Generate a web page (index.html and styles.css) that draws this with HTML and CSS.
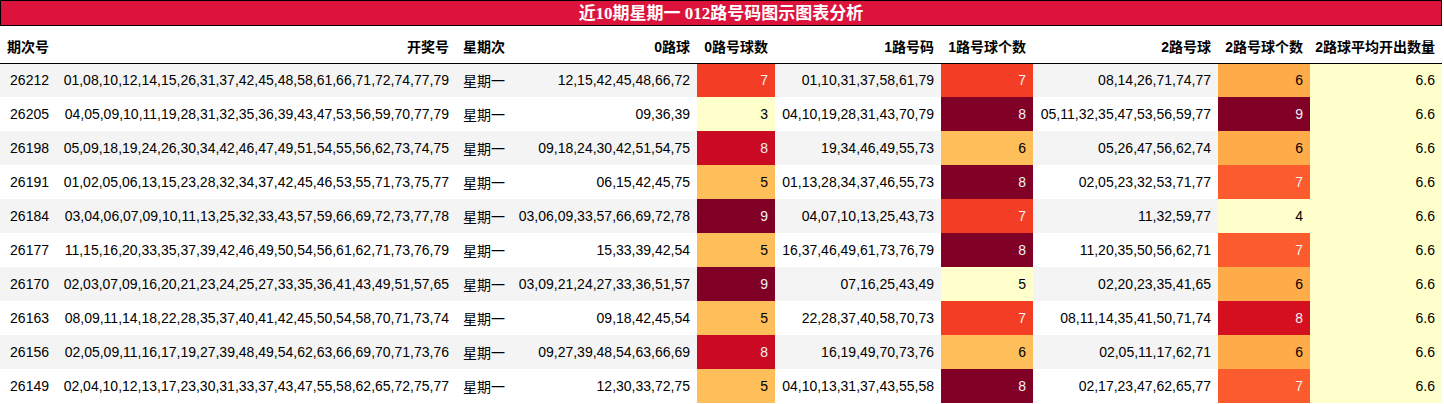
FILE: index.html
```html
<!DOCTYPE html>
<html lang="zh">
<head>
<meta charset="utf-8">
<link rel="stylesheet" href="styles.css">
</head>
<body>
<div class="report">
  <div class="title">近10期星期一 012路号码图示图表分析</div>
  <table class="grid">
    <colgroup>
      <col class="c1"><col class="c2"><col class="c3"><col class="c4"><col class="c5">
      <col class="c6"><col class="c7"><col class="c8"><col class="c9"><col class="c10">
    </colgroup>
    <thead>
      <tr>
        <th>期次号</th><th>开奖号</th><th>星期次</th><th>0路球</th><th>0路号球数</th>
        <th>1路号码</th><th>1路号球个数</th><th>2路号球</th><th>2路号球个数</th><th class="last">2路球平均开出数量</th>
      </tr>
    </thead>
    <tbody>
      <tr>
        <td>26212</td><td>01,08,10,12,14,15,26,31,37,42,45,48,58,61,66,71,72,74,77,79</td><td>星期一</td>
        <td>12,15,42,45,48,66,72</td><td class="g667">7</td>
        <td>01,10,31,37,58,61,79</td><td class="g667">7</td>
        <td>08,14,26,71,74,77</td><td class="g400">6</td><td class="avg">6.6</td>
      </tr>
      <tr>
        <td>26205</td><td>04,05,09,10,11,19,28,31,32,35,36,39,43,47,53,56,59,70,77,79</td><td>星期一</td>
        <td>09,36,39</td><td class="g000">3</td>
        <td>04,10,19,28,31,43,70,79</td><td class="g100">8</td>
        <td>05,11,32,35,47,53,56,59,77</td><td class="g100">9</td><td class="avg">6.6</td>
      </tr>
      <tr>
        <td>26198</td><td>05,09,18,19,24,26,30,34,42,46,47,49,51,54,55,56,62,73,74,75</td><td>星期一</td>
        <td>09,18,24,30,42,51,54,75</td><td class="g833">8</td>
        <td>19,34,46,49,55,73</td><td class="g333">6</td>
        <td>05,26,47,56,62,74</td><td class="g400">6</td><td class="avg">6.6</td>
      </tr>
      <tr>
        <td>26191</td><td>01,02,05,06,13,15,23,28,32,34,37,42,45,46,53,55,71,73,75,77</td><td>星期一</td>
        <td>06,15,42,45,75</td><td class="g333">5</td>
        <td>01,13,28,34,37,46,55,73</td><td class="g100">8</td>
        <td>02,05,23,32,53,71,77</td><td class="g600">7</td><td class="avg">6.6</td>
      </tr>
      <tr>
        <td>26184</td><td>03,04,06,07,09,10,11,13,25,32,33,43,57,59,66,69,72,73,77,78</td><td>星期一</td>
        <td>03,06,09,33,57,66,69,72,78</td><td class="g100">9</td>
        <td>04,07,10,13,25,43,73</td><td class="g667">7</td>
        <td>11,32,59,77</td><td class="g000">4</td><td class="avg">6.6</td>
      </tr>
      <tr>
        <td>26177</td><td>11,15,16,20,33,35,37,39,42,46,49,50,54,56,61,62,71,73,76,79</td><td>星期一</td>
        <td>15,33,39,42,54</td><td class="g333">5</td>
        <td>16,37,46,49,61,73,76,79</td><td class="g100">8</td>
        <td>11,20,35,50,56,62,71</td><td class="g600">7</td><td class="avg">6.6</td>
      </tr>
      <tr>
        <td>26170</td><td>02,03,07,09,16,20,21,23,24,25,27,33,35,36,41,43,49,51,57,65</td><td>星期一</td>
        <td>03,09,21,24,27,33,36,51,57</td><td class="g100">9</td>
        <td>07,16,25,43,49</td><td class="g000">5</td>
        <td>02,20,23,35,41,65</td><td class="g400">6</td><td class="avg">6.6</td>
      </tr>
      <tr>
        <td>26163</td><td>08,09,11,14,18,22,28,35,37,40,41,42,45,50,54,58,70,71,73,74</td><td>星期一</td>
        <td>09,18,42,45,54</td><td class="g333">5</td>
        <td>22,28,37,40,58,70,73</td><td class="g667">7</td>
        <td>08,11,14,35,41,50,71,74</td><td class="g800">8</td><td class="avg">6.6</td>
      </tr>
      <tr>
        <td>26156</td><td>02,05,09,11,16,17,19,27,39,48,49,54,62,63,66,69,70,71,73,76</td><td>星期一</td>
        <td>09,27,39,48,54,63,66,69</td><td class="g833">8</td>
        <td>16,19,49,70,73,76</td><td class="g333">6</td>
        <td>02,05,11,17,62,71</td><td class="g400">6</td><td class="avg">6.6</td>
      </tr>
      <tr>
        <td>26149</td><td>02,04,10,12,13,17,23,30,31,33,37,43,47,55,58,62,65,72,75,77</td><td>星期一</td>
        <td>12,30,33,72,75</td><td class="g333">5</td>
        <td>04,10,13,31,37,43,55,58</td><td class="g100">8</td>
        <td>02,17,23,47,62,65,77</td><td class="g600">7</td><td class="avg">6.6</td>
      </tr>
    </tbody>
  </table>
</div>
</body>
</html>
```

FILE: styles.css
```css
html, body {
  margin: 0;
  padding: 0;
  background: #ffffff;
}

.report {
  width: 1442px;
}

.title {
  box-sizing: border-box;
  height: 26px;
  padding-top: 2px;
  border: 1px solid #000;
  background: #dc143c;
  color: #ffffff;
  font-family: "Liberation Serif", "Noto Sans CJK SC", serif;
  font-weight: bold;
  font-size: 17px;
  line-height: 22px;
  text-align: center;
  overflow: hidden;
}

.grid {
  width: 1442px;
  table-layout: fixed;
  border-collapse: collapse;
  border-spacing: 0;
  font-family: "Liberation Sans", "Noto Sans CJK SC", sans-serif;
  font-size: 14px;
  color: #000;
}

.c1 { width: 56px; }
.c2 { width: 400px; }
.c3 { width: 56px; }
.c4 { width: 185px; }
.c5 { width: 78px; }
.c6 { width: 166px; }
.c7 { width: 92px; }
.c8 { width: 185px; }
.c9 { width: 92px; }
.c10 { width: 132px; }

.grid th,
.grid td {
  padding: 0 7px 0 4px;
  text-align: right;
  white-space: nowrap;
  overflow: visible;
}

.grid th {
  height: 37px;
  padding-top: 3px;
  box-sizing: border-box;
  font-weight: bold;
  border-bottom: 1px solid #000;
  background: #fff;
}

.grid td {
  height: 34px;
  box-sizing: border-box;
}

.grid tbody tr:nth-child(odd) { background: #f4f4f4; }
.grid tbody tr:nth-child(even) { background: #ffffff; }

.g000 { background: #ffffcc; color: #000; }
.g333 { background: #febf5a; color: #000; }
.g400 { background: #feab49; color: #000; }
.g600 { background: #fc5b2e; color: #f1f1f1; }
.g667 { background: #f43d25; color: #f1f1f1; }
.g800 { background: #d41020; color: #f1f1f1; }
.g833 { background: #ca0923; color: #f1f1f1; }
.g100 { background: #800026; color: #f1f1f1; }
.avg { background: #ffffcc; color: #000; }
```
